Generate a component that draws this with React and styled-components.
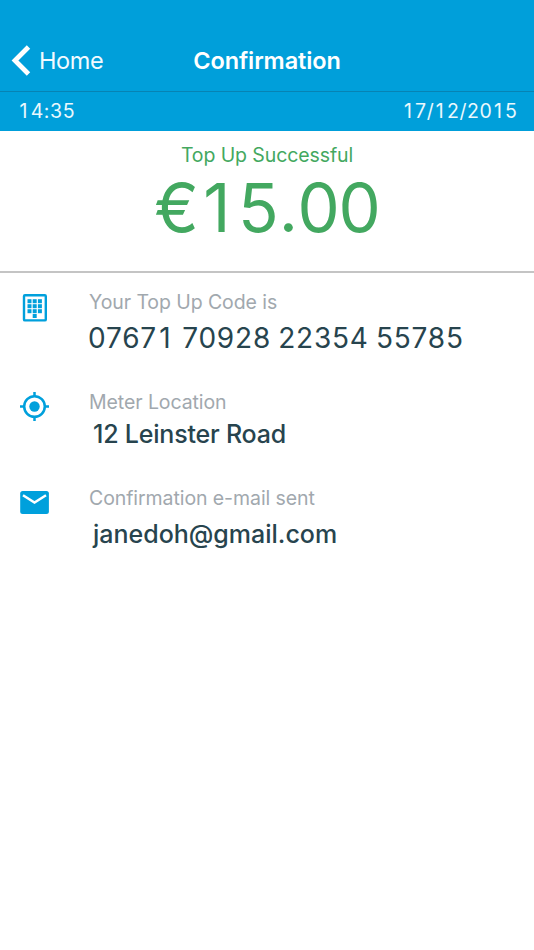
import React from "react";
import styled, { createGlobalStyle } from "styled-components";

const Global = createGlobalStyle`
  * { box-sizing: border-box; }
  body {
    margin: 0;
    background: #fff;
    font-family: Inter, "Liberation Sans", sans-serif;
    white-space: nowrap;
  }
`;

const Screen = styled.main`
  width: 534px;
  height: 950px;
  display: flex;
  flex-direction: column;
  background: #fff;
`;

const NavBar = styled.header`
  height: 92px;
  padding: 30px 11px 0;
  display: grid;
  grid-template-columns: 1fr auto 1fr;
  align-items: center;
  background: #009fda;
  border-bottom: 1px solid #0783b3;
  color: #fff;
`;

const BackButton = styled.button`
  display: flex;
  align-items: center;
  gap: 8px;
  padding: 0;
  border: 0;
  background: none;
  color: #f2faff;
  font: 400 23.5px/32px Inter, sans-serif;
  letter-spacing: -0.4px;
`;

const Title = styled.h1`
  margin: 0;
  font-size: 23.5px;
  line-height: 32px;
  font-weight: 600;
  letter-spacing: -0.1px;
`;

const StatusBar = styled.div`
  height: 39px;
  padding: 0 16.5px 2px 18px;
  display: flex;
  align-items: center;
  justify-content: space-between;
  background: #009fda;
  color: #eaf8fd;
  font-size: 19.5px;
  line-height: 24px;
  letter-spacing: 0.6px;
`;

const Summary = styled.section`
  height: 142px;
  padding-top: 12px;
  display: flex;
  flex-direction: column;
  align-items: center;
  border-bottom: 2px solid #c4c4c4;
  color: #43a860;
`;

const SummaryLabel = styled.div`
  font-size: 19.5px;
  line-height: 24px;
  letter-spacing: -0.1px;
`;

const Amount = styled.div`
  margin-top: 1px;
  font-size: 67px;
  line-height: 80px;
  letter-spacing: -1.2px;
`;

const Details = styled.section`
  padding: 17px 20px 0;
  display: grid;
  grid-template-rows: 100px 96px 90px;
`;

const Detail = styled.div`
  display: grid;
  grid-template-columns: 69px 1fr;
`;

const IconSlot = styled.div`
  padding-top: ${(p) => p.$top}px;
  svg { display: block; }
`;

const Label = styled.div`
  font-size: 19.5px;
  line-height: 24px;
  letter-spacing: -0.08px;
  color: #a1a8ae;
`;

const Value = styled.div`
  margin-top: ${(p) => p.$gap}px;
  margin-left: ${(p) => (p.$code ? -1 : 4)}px;
  font-size: ${(p) => (p.$code ? 28 : 25)}px;
  line-height: 32px;
  font-weight: ${(p) => (p.$code ? 400 : 500)};
  letter-spacing: ${(p) => p.$spacing}px;
  word-spacing: ${(p) => (p.$code ? -1.5 : 0)}px;
  color: #27444e;
`;

/* Widens the narrow "1" and "." so figures keep an even rhythm. */
const Wide = styled.span`
  padding: ${(p) => (p.$dot ? "0 0.01em 0 0.02em" : "0 0.13em 0 0.08em")};
`;

const Figures = ({ children }) => (
  <span>
    {children.split(/([1.])/).map((part, i) =>
      part === "1" || part === "." ? <Wide key={i} $dot={part === "."}>{part}</Wide> : part
    )}
  </span>
);

const BackIcon = () => (
  <svg width="20" height="32" viewBox="0 0 20 32" fill="none">
    <path d="M17.5 2 4 15.5l13.5 13.5" stroke="#fff" strokeWidth="4.8" />
  </svg>
);

const KeypadIcon = () => (
  <svg width="29" height="28" viewBox="0 0 29 28" fill="#00a0dc">
    <rect x="4" y="1.2" width="21.8" height="25.2" rx="1" fill="none" stroke="#00a0dc" strokeWidth="2.4" />
    {[5.2, 10.2, 15.2].map((y) =>
      [7.5, 12.7, 17.9].map((x) => <rect key={`${x}-${y}`} x={x} y={y} width="4" height="4" />)
    )}
    <rect x="12.7" y="20" width="4" height="4" />
  </svg>
);

const TargetIcon = () => (
  <svg width="29" height="29" viewBox="0 0 29 29" fill="none" stroke="#00a0dc" strokeWidth="2.5">
    <circle cx="14.5" cy="14.5" r="10.3" />
    <circle cx="14.5" cy="14.5" r="5.2" fill="#00a0dc" stroke="none" />
    <path d="M14.5 0v4M14.5 25v4M0 14.5h4M25 14.5h4" />
  </svg>
);

const MailIcon = () => (
  <svg width="29" height="23" viewBox="0 0 29 23">
    <rect x="0.2" width="28.7" height="23" rx="2.5" fill="#00a0dc" />
    <path d="M3 4.2 14.5 11.6 26 4.2" fill="none" stroke="#fff" strokeWidth="2.5" />
  </svg>
);

const details = [
  { label: "Your Top Up Code is", value: <Figures>07671 70928 22354 55785</Figures>, icon: <KeypadIcon />, iconTop: 4, gap: 8, spacing: 0.8, code: true },
  { label: "Meter Location", value: "12 Leinster Road", icon: <TargetIcon />, iconTop: 2, gap: 4, spacing: -0.2 },
  { label: "Confirmation e-mail sent", value: "janedoh@gmail.com", icon: <MailIcon />, iconTop: 5, gap: 8, spacing: 0 },
];

export default function App() {
  return (
    <>
      <Global />
      <Screen>
        <NavBar>
          <BackButton><BackIcon />Home</BackButton>
          <Title>Confirmation</Title>
        </NavBar>
        <StatusBar>
          <Figures>14:35</Figures>
          <Figures>17/12/2015</Figures>
        </StatusBar>
        <Summary>
          <SummaryLabel>Top Up Successful</SummaryLabel>
          <Amount><Figures>€15.00</Figures></Amount>
        </Summary>
        <Details>
          {details.map((d) => (
            <Detail key={d.label}>
              <IconSlot $top={d.iconTop}>{d.icon}</IconSlot>
              <div>
                <Label>{d.label}</Label>
                <Value $gap={d.gap} $code={d.code} $spacing={d.spacing}>{d.value}</Value>
              </div>
            </Detail>
          ))}
        </Details>
      </Screen>
    </>
  );
}
